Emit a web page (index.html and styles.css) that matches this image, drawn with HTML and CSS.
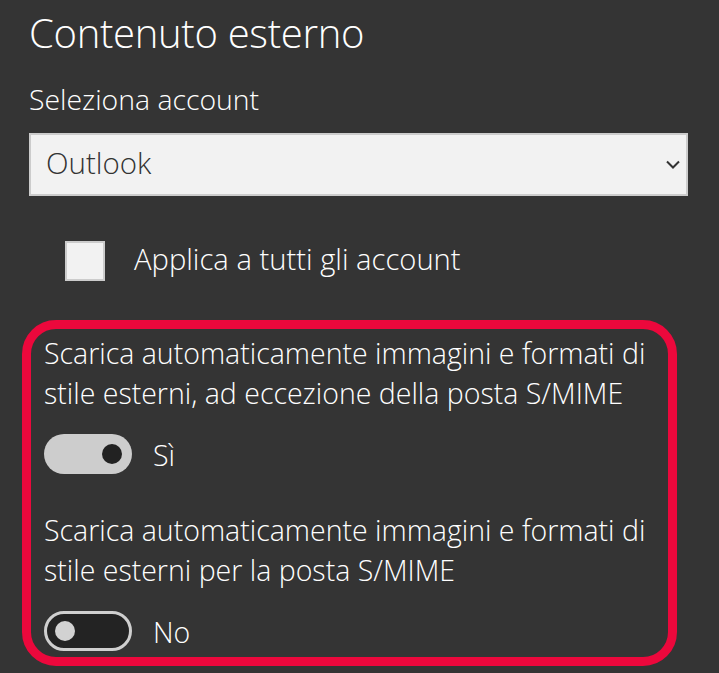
FILE: index.html
```html
<!DOCTYPE html>
<html lang="it">
<head>
<meta charset="utf-8">
<title>Contenuto esterno</title>
<link rel="stylesheet" href="styles.css">
</head>
<body>
<main class="page">
  <h1 class="title">Contenuto esterno</h1>
  <div class="field-label">Seleziona account</div>
  <div class="select">
    <span class="select-value">Outlook</span>
    <svg class="chevron" width="14" height="9" viewBox="0 0 14 9" aria-hidden="true"><polyline points="1,1.5 7,7.5 13,1.5" fill="none" stroke="#333333" stroke-width="2"/></svg>
  </div>
  <div class="check-row">
    <span class="checkbox"></span>
    <span class="check-label">Applica a tutti gli account</span>
  </div>
  <section class="highlight">
    <div class="setting">
      <p class="setting-text">Scarica automaticamente immagini e formati di<br>stile esterni, ad eccezione della posta S/MIME</p>
      <div class="toggle-row">
        <span class="toggle toggle-on"><span class="knob"></span></span>
        <span class="toggle-label">Sì</span>
      </div>
    </div>
    <div class="setting setting-second">
      <p class="setting-text">Scarica automaticamente immagini e formati di<br>stile esterni per la posta S/MIME</p>
      <div class="toggle-row">
        <span class="toggle toggle-off"><span class="knob"></span></span>
        <span class="toggle-label">No</span>
      </div>
    </div>
  </section>
</main>
</body>
</html>
```
FILE: styles.css
```css
html, body {
  margin: 0;
  padding: 0;
  background: #343434;
}
body {
  font-family: "Open Sans", "Noto Sans", sans-serif;
  font-weight: 300;
  color: #ffffff;
}
.page {
  padding-left: 29px;
  display: flex;
  flex-direction: column;
  align-items: flex-start;
}
.title {
  margin: 5px 0 0 0;
  font-size: 40px;
  line-height: 56px;
  font-weight: 300;
  letter-spacing: -0.3px;
}
.field-label {
  margin-top: 18px;
  font-size: 28.4px;
  line-height: 40px;
}
.select {
  margin-top: 14px;
  box-sizing: border-box;
  width: 659px;
  height: 63px;
  background: #f2f2f2;
  border: 2px solid #cccccc;
  display: flex;
  align-items: center;
  justify-content: space-between;
  padding: 0 6px 0 15px;
}
.select-value {
  color: #333333;
  font-size: 29.5px;
  line-height: 40px;
  padding-bottom: 3px;
  font-weight: 300;
}
.chevron {
  display: block;
}
.check-row {
  margin-top: 43px;
  margin-left: 36px;
  display: flex;
  align-items: center;
  gap: 29px;
}
.checkbox {
  box-sizing: border-box;
  width: 40px;
  height: 40px;
  background: #f2f2f2;
  border: 2px solid #cccccc;
}
.check-label {
  font-size: 29.2px;
  line-height: 40px;
  padding-bottom: 4px;
}
.highlight {
  margin: 37px 0 0 -7px;
  box-sizing: border-box;
  width: 655px;
  border: 9px solid #ec083c;
  border-radius: 34px;
  padding: 4px 13px 5px 13px;
}
.setting-text {
  margin: 0;
  font-size: 28.5px;
  line-height: 40px;
}
.setting-second {
  margin-top: 35px;
}
.toggle-row {
  margin-top: 19px;
  display: flex;
  align-items: center;
  gap: 21px;
}
.toggle {
  box-sizing: border-box;
  width: 88px;
  height: 40px;
  border-radius: 20px;
  display: flex;
  align-items: center;
}
.toggle-on {
  background: #cdcdcd;
  justify-content: flex-end;
  padding-right: 10px;
}
.toggle-off {
  background: #232323;
  border: 3px solid #cfcfcf;
  padding-left: 8px;
}
.knob {
  width: 20px;
  height: 20px;
  border-radius: 50%;
}
.toggle-on .knob {
  background: #222222;
}
.toggle-off .knob {
  background: #d2d2d2;
}
.toggle-label {
  font-size: 28.5px;
  line-height: 40px;
  padding-top: 3px;
}
```
